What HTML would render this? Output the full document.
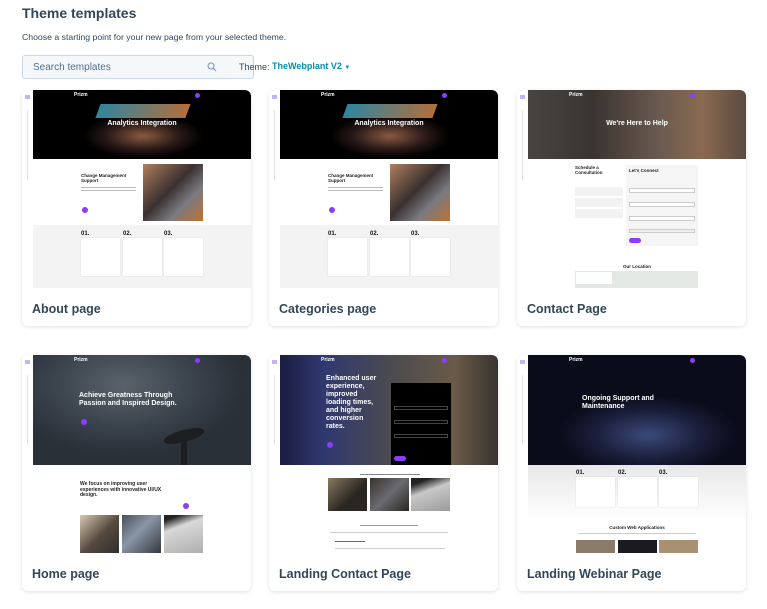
<!DOCTYPE html>
<html><head><meta charset="utf-8"><style>
*{box-sizing:border-box;margin:0;padding:0}
body{width:767px;height:609px;background:#fff;font-family:"Liberation Sans",sans-serif;position:relative;overflow:hidden;color:#33475b}
.a{position:absolute}
h1{position:absolute;left:22px;top:5px;font-size:14px;font-weight:bold;color:#33475b}
.sub{left:22px;top:32px;font-size:8.7px;color:#33475b}
.search{left:22px;top:55px;width:232px;height:24px;background:#f5f8fa;border:1px solid #cbd6e2;border-radius:3px;font-size:10px;color:#516f90;padding:6px 10px}
.card{position:absolute;width:229px;height:236px;background:#fff;border-radius:6px;box-shadow:0 1px 4px rgba(0,0,0,.12);overflow:hidden}
.th{position:absolute;left:11px;top:0;width:218px;height:198px;background:#fff;overflow:hidden;border-top-right-radius:6px}
.strip{position:absolute;left:0;top:0;width:11px;height:198px;background:#fff}
.strip i{position:absolute;left:3px;top:5px;width:5px;height:4px;background:#c6b3f5}
.strip b{position:absolute;left:5px;top:20px;width:1px;height:70px;background:#e4e4e4}
.tt{position:absolute;left:10px;top:212px;font-size:12.5px;font-weight:bold;color:#33475b}
.prizm{position:absolute;top:2px;font-size:5px;color:#fff;font-weight:bold}
.dot{position:absolute;width:5px;height:5px;border-radius:50%;background:#8b3dff}
.wb{position:absolute;background:#fff;box-shadow:0 0 1px #ccc}
.ln{position:absolute;height:1px;background:#bbb}
.num{position:absolute;font-size:6px;font-weight:bold;color:#111}
.ph{position:absolute}
</style></head><body>
<h1>Theme templates</h1>
<div class="a sub">Choose a starting point for your new page from your selected theme.</div>
<div class="a search">Search templates
<svg class="a" style="left:184px;top:6px" width="10" height="10" viewBox="0 0 10 10"><circle cx="4" cy="4" r="3" fill="none" stroke="#7c98b6" stroke-width="1.1"/><path d="M6.3 6.3L9 9" stroke="#7c98b6" stroke-width="1.2"/></svg></div>
<div class="a" style="left:239px;top:62px;font-size:9px;color:#33475b">Theme:</div>
<div class="a" style="left:272px;top:61px;font-size:9px;font-weight:bold;color:#0091ae">TheWebplant V2 <span style="font-size:6px">▼</span></div>

<!-- Card 1 About -->
<div class="card" style="left:22px;top:90px">
 <div class="strip"><i></i><b></b></div>
 <div class="th">
  <div class="a" style="left:0;top:0;width:218px;height:69px;background:radial-gradient(ellipse 60px 22px at 110px 46px,#8a5a40,#2a1a18 60%,#000 100%)"></div>
  <div class="a" style="left:65px;top:14px;width:90px;height:14px;background:linear-gradient(90deg,#3aa7c8,#e08a4a);transform:skewX(-20deg);opacity:.8"></div>
  <div class="prizm" style="left:41px">Prizm</div><div class="dot" style="left:162px;top:3px"></div>
  <div class="a" style="left:0;top:30px;width:218px;text-align:center;font-size:7px;font-weight:bold;color:#fff">Analytics Integration</div>
  <div class="a" style="left:48px;top:83px;font-size:4.5px;font-weight:bold;color:#222;width:55px">Change Management Support</div>
  <div class="ln" style="left:48px;top:97px;width:55px"></div><div class="ln" style="left:48px;top:100px;width:55px"></div>
  <div class="dot" style="left:49px;top:117px;width:6px;height:6px"></div>
  <div class="ph" style="left:110px;top:74px;width:60px;height:57px;background:linear-gradient(135deg,#b08060,#3a3030 45%,#7a7a80 70%,#c07030)"></div>
  <div class="a" style="left:0;top:135px;width:218px;height:63px;background:#f3f3f3"></div>
  <div class="num" style="left:48px;top:141px">01.</div><div class="num" style="left:90px;top:141px">02.</div><div class="num" style="left:131px;top:141px">03.</div>
  <div class="wb" style="left:48px;top:148px;width:39px;height:38px"></div><div class="wb" style="left:90px;top:148px;width:39px;height:38px"></div><div class="wb" style="left:131px;top:148px;width:39px;height:38px"></div>
 </div>
 <div class="tt">About page</div>
</div>

<!-- Card 2 Categories -->
<div class="card" style="left:269px;top:90px">
 <div class="strip"><i></i><b></b></div>
 <div class="th">
  <div class="a" style="left:0;top:0;width:218px;height:69px;background:radial-gradient(ellipse 60px 22px at 110px 46px,#8a5a40,#2a1a18 60%,#000 100%)"></div>
  <div class="a" style="left:65px;top:14px;width:90px;height:14px;background:linear-gradient(90deg,#3aa7c8,#e08a4a);transform:skewX(-20deg);opacity:.8"></div>
  <div class="prizm" style="left:41px">Prizm</div><div class="dot" style="left:162px;top:3px"></div>
  <div class="a" style="left:0;top:30px;width:218px;text-align:center;font-size:7px;font-weight:bold;color:#fff">Analytics Integration</div>
  <div class="a" style="left:48px;top:83px;font-size:4.5px;font-weight:bold;color:#222;width:55px">Change Management Support</div>
  <div class="ln" style="left:48px;top:97px;width:55px"></div><div class="ln" style="left:48px;top:100px;width:55px"></div>
  <div class="dot" style="left:49px;top:117px;width:6px;height:6px"></div>
  <div class="ph" style="left:110px;top:74px;width:60px;height:57px;background:linear-gradient(135deg,#b08060,#3a3030 45%,#7a7a80 70%,#c07030)"></div>
  <div class="a" style="left:0;top:135px;width:218px;height:63px;background:#f3f3f3"></div>
  <div class="num" style="left:48px;top:141px">01.</div><div class="num" style="left:90px;top:141px">02.</div><div class="num" style="left:131px;top:141px">03.</div>
  <div class="wb" style="left:48px;top:148px;width:39px;height:38px"></div><div class="wb" style="left:90px;top:148px;width:39px;height:38px"></div><div class="wb" style="left:131px;top:148px;width:39px;height:38px"></div>
 </div>
 <div class="tt">Categories page</div>
</div>

<!-- Card 3 Contact -->
<div class="card" style="left:517px;top:90px">
 <div class="strip"><i></i><b></b></div>
 <div class="th">
  <div class="a" style="left:0;top:0;width:218px;height:69px;background:linear-gradient(90deg,#4a4440,#3a3430 30%,#6a5a50 60%,#8a6a50 80%,#5a4a40)"></div>
  <div class="prizm" style="left:41px">Prizm</div><div class="dot" style="left:162px;top:3px"></div>
  <div class="a" style="left:0;top:30px;width:218px;text-align:center;font-size:7px;font-weight:bold;color:#fff">We're Here to Help</div>
  <div class="a" style="left:47px;top:75px;font-size:4.5px;font-weight:bold;color:#222;width:40px">Schedule a Consultation</div>
  <div class="a" style="left:47px;top:97px;width:48px;height:9px;background:#f2f2f2"></div>
  <div class="a" style="left:47px;top:108px;width:48px;height:9px;background:#f2f2f2"></div>
  <div class="a" style="left:47px;top:119px;width:48px;height:9px;background:#f2f2f2"></div>
  <div class="a" style="left:98px;top:75px;width:72px;height:81px;background:#f5f5f5"></div>
  <div class="a" style="left:101px;top:78px;font-size:4.5px;font-weight:bold;color:#222">Let's Connect</div>
  <div class="a" style="left:101px;top:98px;width:66px;height:5px;border:1px solid #ccc;background:#fff"></div>
  <div class="a" style="left:101px;top:112px;width:66px;height:5px;border:1px solid #ccc;background:#fff"></div>
  <div class="a" style="left:101px;top:126px;width:66px;height:5px;border:1px solid #ccc;background:#fff"></div>
  <div class="a" style="left:101px;top:139px;width:66px;height:4px;border:1px solid #ccc;background:#eee"></div>
  <div class="a" style="left:101px;top:148px;width:12px;height:5px;border-radius:3px;background:#8b3dff"></div>
  <div class="a" style="left:0;top:174px;width:218px;text-align:center;font-size:4.5px;font-weight:bold;color:#222">Our Location</div>
  <div class="a" style="left:47px;top:181px;width:123px;height:17px;background:#e4e8e4"></div>
  <div class="a" style="left:48px;top:182px;width:36px;height:12px;background:#fff"></div>
 </div>
 <div class="tt">Contact Page</div>
</div>

<!-- Card 4 Home -->
<div class="card" style="left:22px;top:355px">
 <div class="strip"><i></i><b></b></div>
 <div class="th">
  <div class="a" style="left:0;top:0;width:218px;height:110px;background:radial-gradient(ellipse 120px 70px at 90px 30px,#5a626c,#3a424c 60%,#2a3038)"></div>
  <div class="a" style="left:130px;top:75px;width:42px;height:12px;border-radius:50%;background:#1c1e22;transform:rotate(-15deg)"></div>
  <div class="a" style="left:148px;top:85px;width:6px;height:25px;background:#1c1e22"></div>
  <div class="prizm" style="left:41px">Prizm</div><div class="dot" style="left:162px;top:3px"></div>
  <div class="a" style="left:46px;top:37px;font-size:7px;font-weight:bold;color:#fff;line-height:8px">Achieve Greatness Through<br>Passion and Inspired Design.</div>
  <div class="dot" style="left:48px;top:64px;width:6px;height:6px"></div>
  <div class="a" style="left:47px;top:127px;font-size:5px;font-weight:bold;color:#222;line-height:5.5px;width:85px">We focus on improving user experiences with innovative UI/UX design.</div>
  <div class="dot" style="left:150px;top:148px;width:6px;height:6px"></div>
  <div class="ph" style="left:47px;top:160px;width:39px;height:43px;background:linear-gradient(135deg,#d8c8b0,#554a40 50%,#2a2a2a)"></div>
  <div class="ph" style="left:89px;top:160px;width:39px;height:43px;background:linear-gradient(135deg,#4a5058,#8a96a6 40%,#2a2e34)"></div>
  <div class="ph" style="left:131px;top:160px;width:39px;height:43px;background:linear-gradient(160deg,#222 10%,#d8d8d8 30%,#a8a8a8)"></div>
 </div>
 <div class="tt">Home page</div>
</div>

<!-- Card 5 Landing Contact -->
<div class="card" style="left:269px;top:355px">
 <div class="strip"><i></i><b></b></div>
 <div class="th">
  <div class="a" style="left:0;top:0;width:218px;height:110px;background:linear-gradient(90deg,#1a1c40,#303870 20%,#4a4a50 50%,#6a5a48 80%,#3a3430)"></div>
  <div class="prizm" style="left:41px">Prizm</div><div class="dot" style="left:162px;top:3px"></div>
  <div class="a" style="left:46px;top:20px;font-size:7px;font-weight:bold;color:#fff;line-height:8px">Enhanced user<br>experience,<br>improved<br>loading times,<br>and higher<br>conversion<br>rates.</div>
  <div class="dot" style="left:47px;top:87px;width:6px;height:6px"></div>
  <div class="a" style="left:111px;top:28px;width:60px;height:82px;background:#000"></div>
  <div class="a" style="left:114px;top:51px;width:54px;height:4px;border:1px solid #444"></div>
  <div class="a" style="left:114px;top:65px;width:54px;height:4px;border:1px solid #444"></div>
  <div class="a" style="left:114px;top:79px;width:54px;height:4px;border:1px solid #444"></div>
  <div class="a" style="left:114px;top:101px;width:12px;height:5px;border-radius:3px;background:#8b3dff"></div>
  <div class="ln" style="left:80px;top:119px;width:60px;background:#888"></div>
  <div class="ph" style="left:48px;top:123px;width:39px;height:33px;background:linear-gradient(135deg,#8a7a60,#2a2622 60%)"></div>
  <div class="ph" style="left:90px;top:123px;width:39px;height:33px;background:linear-gradient(135deg,#3a3430,#6a6a70 50%,#2a2622)"></div>
  <div class="ph" style="left:131px;top:123px;width:39px;height:33px;background:linear-gradient(160deg,#222 15%,#c8c8c8 40%,#9a9a9a)"></div>
  <div class="ln" style="left:80px;top:170px;width:58px;background:#999"></div>
  <div class="ln" style="left:50px;top:177px;width:118px;background:#ccc"></div>
  <div class="ln" style="left:55px;top:186px;width:30px;background:#666"></div>
  <div class="ln" style="left:55px;top:193px;width:110px;background:#ccc"></div>
 </div>
 <div class="tt">Landing Contact Page</div>
</div>

<!-- Card 6 Webinar -->
<div class="card" style="left:517px;top:355px">
 <div class="strip"><i></i><b></b></div>
 <div class="th">
  <div class="a" style="left:0;top:0;width:218px;height:110px;background:radial-gradient(ellipse 90px 40px at 120px 80px,#3a4a7a,#1a1e3a 60%,#0a0c1a)"></div>
  <div class="prizm" style="left:41px">Prizm</div><div class="dot" style="left:162px;top:3px"></div>
  <div class="a" style="left:54px;top:40px;font-size:7px;font-weight:bold;color:#fff;line-height:8px">Ongoing Support and<br>Maintenance</div>
  <div class="a" style="left:0;top:110px;width:218px;height:55px;background:linear-gradient(#e8e8e8,#fff)"></div>
  <div class="num" style="left:48px;top:115px">01.</div><div class="num" style="left:90px;top:115px">02.</div><div class="num" style="left:131px;top:115px">03.</div>
  <div class="wb" style="left:48px;top:122px;width:39px;height:30px"></div><div class="wb" style="left:90px;top:122px;width:39px;height:30px"></div><div class="wb" style="left:131px;top:122px;width:39px;height:30px"></div>
  <div class="a" style="left:0;top:170px;width:218px;text-align:center;font-size:4.5px;font-weight:bold;color:#222">Custom Web Applications</div>
  <div class="ln" style="left:50px;top:178px;width:118px;background:#ccc"></div>
  <div class="ph" style="left:48px;top:185px;width:39px;height:13px;background:#8a7a6a"></div>
  <div class="ph" style="left:90px;top:185px;width:39px;height:13px;background:#1a1a20"></div>
  <div class="ph" style="left:131px;top:185px;width:39px;height:13px;background:#a89070"></div>
 </div>
 <div class="tt">Landing Webinar Page</div>
</div>
</body></html>
